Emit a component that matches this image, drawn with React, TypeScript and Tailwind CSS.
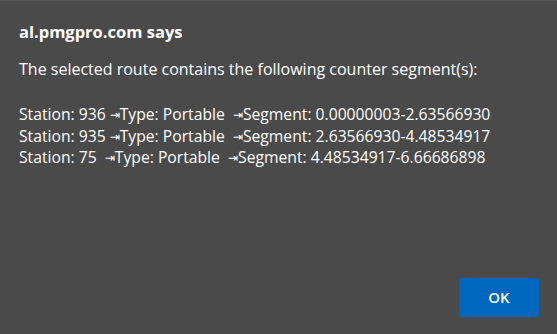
const rows = [
  { station: "936 ", seg: "0.00000003-2.63566930" },
  { station: "935 ", seg: "2.63566930-4.48534917" },
  { station: "75  ", seg: "4.48534917-6.66686898" },
]

function Tab() {
  return <span className="text-[12px] align-[1px]">⇥</span>
}

export default function App() {
  return (
    <div className="w-[557px] h-[334px] bg-[#4a4a4a] border-t border-[#5a5a5a] text-white font-['Segoe_UI','Open_Sans',sans-serif] flex flex-col">
      <div className="px-[19px] pt-[21px] flex-1">
        <h1 className="text-[16.5px] font-bold leading-5">al.pmgpro.com says</h1>
        <p className="text-[16px] mt-[17px] leading-5">The selected route contains the following counter segment(s):</p>
        <div className="mt-[25px] text-[15.7px] leading-[21.5px]">
          {rows.map((r) => (
            <div key={r.station} className="whitespace-pre">
              Station: {r.station}
              <Tab />
              Type: Portable  <Tab />
              Segment: {r.seg}
            </div>
          ))}
        </div>
      </div>
      <div className="flex justify-end px-[18px] pb-[17px]">
        <button className="w-[80px] h-[39px] bg-[#0067c0] rounded-[3px] text-[15px] font-semibold text-white">
          OK
        </button>
      </div>
    </div>
  )
}
